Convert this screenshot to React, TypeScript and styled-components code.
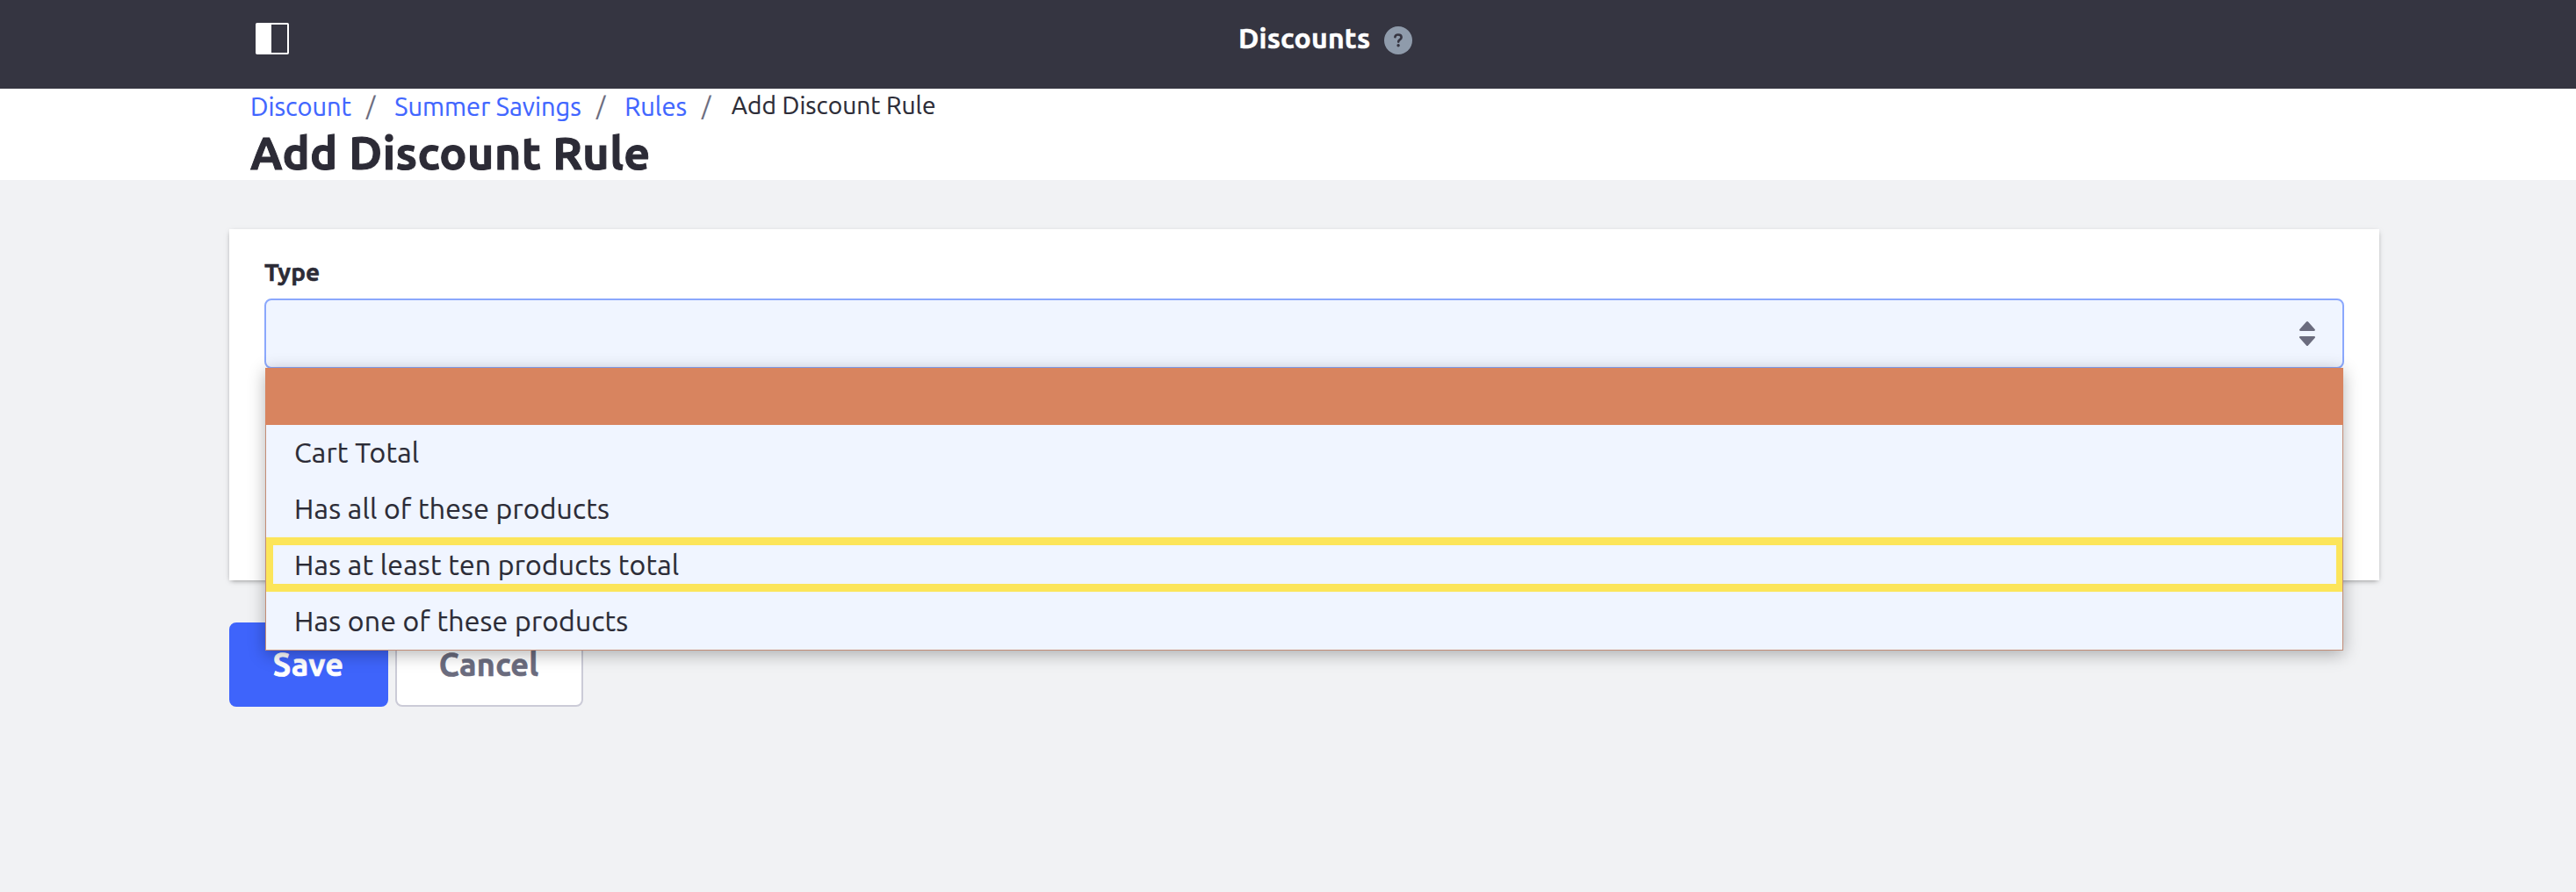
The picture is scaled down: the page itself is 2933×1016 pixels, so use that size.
import React from 'react';
import styled, { createGlobalStyle } from 'styled-components';

const GlobalStyle = createGlobalStyle`
  *, *::before, *::after { box-sizing: border-box; }
  body {
    margin: 0;
    min-height: 100vh;
    background: #f1f2f4;
    color: #2b2b36;
    font-family: Ubuntu, "Noto Sans", sans-serif;
    -webkit-text-stroke: 0.2px currentColor;
  }
`;

const TopBar = styled.header`
  display: flex;
  align-items: flex-start;
  height: 101px;
  padding-left: 291px;
  background: #353541;
`;

const PanelToggle = styled.button`
  width: 38px;
  height: 36px;
  margin: 26px 1081px 0 0;
  padding: 0;
  border: 0;
  background: none;
  svg { display: block; }
`;

const AppTitle = styled.div`
  display: flex;
  align-items: center;
  gap: 16px;
  height: 86px;
  color: #fff;
  font-size: 32px;
  font-weight: 700;
  letter-spacing: 0.25px;
  white-space: nowrap;
  -webkit-text-stroke: 0.5px currentColor;
`;

const HelpBadge = styled.span`
  display: flex;
  align-items: center;
  justify-content: center;
  width: 32px;
  height: 32px;
  margin-top: 6px;
  border-radius: 50%;
  background: #8f9bab;
`;

const PageHeader = styled.section`
  height: 104px;
  padding-left: 285px;
  background: #fff;
  overflow: hidden;
`;

const Breadcrumb = styled.nav`
  display: flex;
  align-items: center;
  height: 38px;
  font-size: 28px;
  line-height: 38px;
  white-space: nowrap;
`;

const Crumb = styled.a`
  padding-top: 1px;
  color: #4065ff;
  font-size: 29px;
  text-decoration: none;
`;

const Separator = styled.span`
  margin: 0 22px 0 17px;
  padding-top: 1px;
  color: #6b6c7e;
`;

const CurrentCrumb = styled.span`
  margin-left: 1.5px;
  letter-spacing: 0.1px;
`;

const PageTitle = styled.h1`
  margin: 0;
  color: #2c2b36;
  font-size: 52px;
  font-weight: 700;
  line-height: 70px;
  letter-spacing: 0.4px;
  -webkit-text-stroke: 1px currentColor;
`;

const Main = styled.main`
  width: 2448px;
  margin: 56px 0 0 261px;
`;

const Sheet = styled.section`
  height: 400px;
  padding: 29px 40px 0;
  background: #fff;
  box-shadow: 0 2px 6px -2px rgba(0, 0, 0, 0.5);
`;

const Label = styled.label`
  display: block;
  margin-bottom: 10px;
  font-size: 28px;
  font-weight: 700;
  line-height: 40px;
  letter-spacing: 0.1px;
  -webkit-text-stroke: 0.5px currentColor;
`;

const Select = styled.div`
  position: relative;
`;

const SelectField = styled.div`
  display: flex;
  align-items: center;
  justify-content: flex-end;
  height: 80px;
  padding-right: 31px;
  border: 2px solid #8ba8fc;
  border-radius: 8px;
  background: #f0f5ff;
`;

const Menu = styled.ul`
  position: absolute;
  z-index: 1;
  top: 79px;
  left: 1px;
  right: 1px;
  margin: 0;
  padding: 0;
  border: 1px solid #c38d76;
  border-top-color: #d8845f;
  background: #f0f5ff;
  box-shadow: 0 4px 18px rgba(0, 0, 0, 0.3);
  list-style: none;
`;

const Option = styled.li<{ $active?: boolean; $outlined?: boolean }>`
  position: relative;
  height: 64px;
  padding-left: 32px;
  background: ${(p) => (p.$active ? '#d8845f' : 'transparent')};
  ${(p) => p.$active && 'margin: 0 -1px;'}
  font-size: 32px;
  line-height: 62px;
  letter-spacing: 0.2px;
  white-space: nowrap;

  &::after {
    content: '';
    display: ${(p) => (p.$outlined ? 'block' : 'none')};
    position: absolute;
    inset: 0 0 2px;
    border: solid #fce55a;
    border-width: 9px 7px 9px 8px;
  }
`;

const Actions = styled.div`
  display: flex;
  gap: 8px;
  margin-top: 48px;
`;

const Button = styled.button<{ $primary?: boolean }>`
  width: ${(p) => (p.$primary ? 181 : 214)}px;
  height: 96px;
  padding: 0 1px 2px 0;
  border: 2px solid ${(p) => (p.$primary ? '#3e64fb' : '#cbcbd7')};
  border-radius: 8px;
  background: ${(p) => (p.$primary ? '#3e64fb' : '#fff')};
  color: ${(p) => (p.$primary ? '#fff' : '#6b6c7e')};
  font: 700 36px Ubuntu, "Noto Sans", sans-serif;
  letter-spacing: 0.2px;
  -webkit-text-stroke: 0.6px currentColor;
`;

const links = ['Discount', 'Summer Savings', 'Rules'];

const options = [
  { label: '', active: true },
  { label: 'Cart Total' },
  { label: 'Has all of these products' },
  { label: 'Has at least ten products total', outlined: true },
  { label: 'Has one of these products' },
];

export default function App() {
  return (
    <>
      <GlobalStyle />
      <TopBar>
        <PanelToggle aria-label="Toggle menu">
          <svg width="38" height="36" viewBox="0 0 38 36">
            <rect x="1" y="1" width="36" height="34" rx="0.8" fill="none" stroke="#fff" strokeWidth="2" />
            <path d="M1 1h17v34H1z" fill="#fff" />
          </svg>
        </PanelToggle>
        <AppTitle>
          Discounts
          <HelpBadge>
            <svg width="10" height="16" viewBox="0 0 10 16">
              <path d="M1.4 4.2C1.6 2.3 3 1.500 5 1.500c2.200 0 3.600 1.100 3.600 2.900 0 2.700-3.400 2.600-3.400 5.200" fill="none" stroke="#363541" strokeWidth="2.700" strokeLinecap="round" />
              <circle cx="5.100" cy="13.700" r="1.700" fill="#363541" />
            </svg>
          </HelpBadge>
        </AppTitle>
      </TopBar>
      <PageHeader>
        <Breadcrumb>
          {links.map((l) => (
            <React.Fragment key={l}>
              <Crumb>{l}</Crumb>
              <Separator>/</Separator>
            </React.Fragment>
          ))}
          <CurrentCrumb>Add Discount Rule</CurrentCrumb>
        </Breadcrumb>
        <PageTitle>Add Discount Rule</PageTitle>
      </PageHeader>
      <Main>
        <Sheet>
          <Label>Type</Label>
          <Select>
            <SelectField>
              <svg width="18" height="28" viewBox="0 0 18 28">
                <path
                  d="M8 .6a1.400 1.400 0 0 1 2 0l7.600 8.300c.7.8.4 2.100-.8 2.100H1.200C0 11-.3 9.700.4 8.900zM8 27.400a1.400 1.400 0 0 0 2 0l7.600-8.300c.7-.8.4-2.100-.8-2.100H1.200C0 17-.3 18.300.4 19.100z"
                  fill="#6b6c7e"
                />
              </svg>
            </SelectField>
            <Menu>
              {options.map((o) => (
                <Option key={o.label} $active={o.active} $outlined={o.outlined}>
                  {o.label}
                </Option>
              ))}
            </Menu>
          </Select>
        </Sheet>
        <Actions>
          <Button $primary>Save</Button>
          <Button>Cancel</Button>
        </Actions>
      </Main>
    </>
  );
}
